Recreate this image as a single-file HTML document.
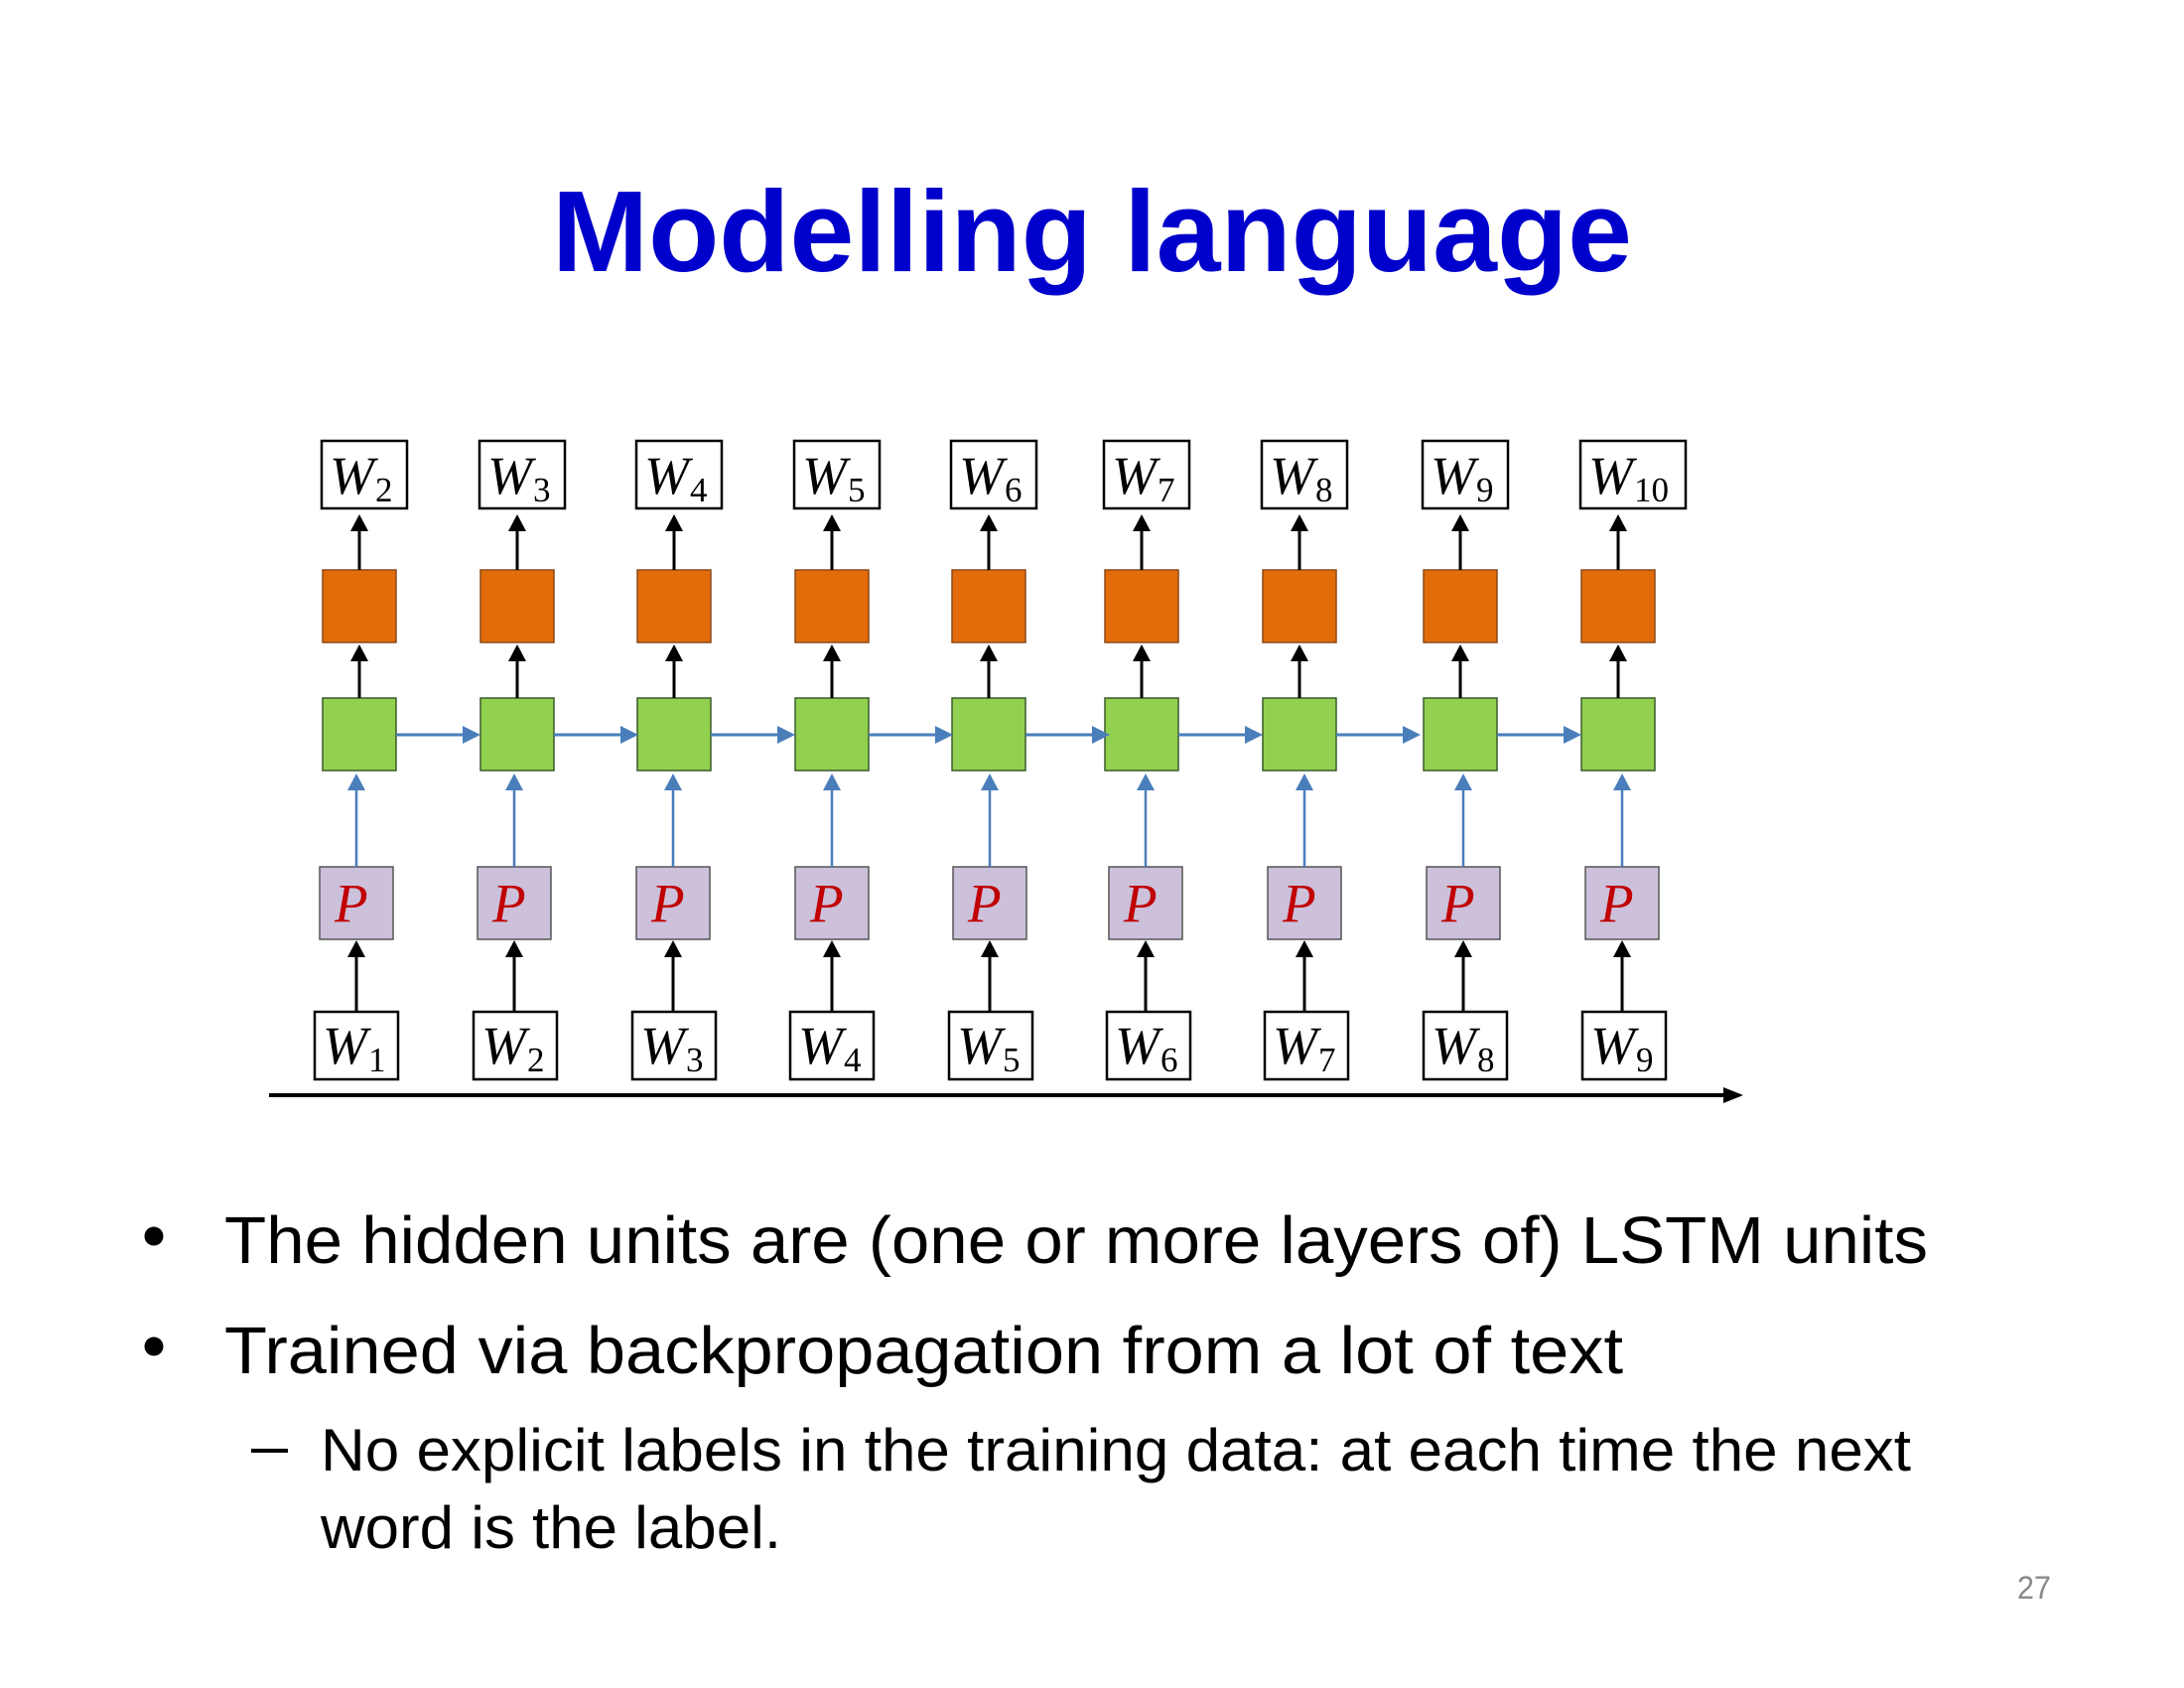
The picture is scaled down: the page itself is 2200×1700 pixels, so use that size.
<!DOCTYPE html>
<html><head><meta charset="utf-8"><style>
html,body{margin:0;padding:0;background:#fff}
svg{display:block}
.w{font-family:"Liberation Serif",serif;font-style:italic;font-size:54px}
.s{font-family:"Liberation Serif",serif;font-style:normal;font-size:35px}
.p{font-family:"Liberation Serif",serif;font-style:italic;font-size:55px;fill:#C00000}
.t{font-family:"Liberation Sans",sans-serif;font-size:67px}
.t2{font-family:"Liberation Sans",sans-serif;font-size:60px}
</style></head><body>
<svg width="2200" height="1700" viewBox="0 0 2200 1700" xmlns="http://www.w3.org/2000/svg">
<text x="556" y="273" font-family="Liberation Sans, sans-serif" font-weight="bold" font-size="116" fill="#0000CC" textLength="1088" lengthAdjust="spacingAndGlyphs">Modelling language</text>

<defs>
<g id="col">
  <rect x="0" y="574" width="74" height="73" fill="#E36C0A" stroke="#8a4a1a" stroke-width="1.5"/>
  <rect x="0" y="703" width="74" height="73" fill="#92D050" stroke="#3a5a2a" stroke-width="1.5"/>
  <line x1="37" y1="574" x2="37" y2="534" stroke="#000" stroke-width="3"/>
  <polygon points="28,535 46,535 37,518" fill="#000"/>
  <line x1="37" y1="703" x2="37" y2="664" stroke="#000" stroke-width="3"/>
  <polygon points="28,666 46,666 37,649" fill="#000"/>
</g>
<g id="pc">
  <rect x="0" y="873" width="74" height="73" fill="#CCC0DA" stroke="#555" stroke-width="1.5"/>
  <text class="p" x="15" y="928">P</text>
  <line x1="37" y1="873" x2="37" y2="794" stroke="#4A7EBB" stroke-width="2.5"/>
  <polygon points="28,796 46,796 37,779" fill="#4A7EBB"/>
  <line x1="37" y1="1019" x2="37" y2="962" stroke="#000" stroke-width="3"/>
  <polygon points="28,964 46,964 37,947" fill="#000"/>
</g>
<g id="ha">
  <line x1="0" y1="740" x2="68" y2="740" stroke="#4A7EBB" stroke-width="3"/>
  <polygon points="67,731 67,749 85,740" fill="#4A7EBB"/>
</g>
</defs>

<use href="#col" x="325"/><use href="#col" x="484"/><use href="#col" x="642"/><use href="#col" x="801"/><use href="#col" x="959"/><use href="#col" x="1113"/><use href="#col" x="1272"/><use href="#col" x="1434"/><use href="#col" x="1593"/>
<use href="#pc" x="322"/><use href="#pc" x="481"/><use href="#pc" x="641"/><use href="#pc" x="801"/><use href="#pc" x="960"/><use href="#pc" x="1117"/><use href="#pc" x="1277"/><use href="#pc" x="1437"/><use href="#pc" x="1597"/>
<use href="#ha" x="399"/><use href="#ha" x="558"/><use href="#ha" x="716"/><use href="#ha" x="875"/><use href="#ha" x="1033"/><use href="#ha" x="1187"/><use href="#ha" x="1346"/><use href="#ha" x="1508"/>

<g fill="#fff" stroke="#000" stroke-width="2.5">
<rect x="324" y="444" width="86" height="68"/><rect x="483" y="444" width="86" height="68"/><rect x="641" y="444" width="86" height="68"/><rect x="800" y="444" width="86" height="68"/><rect x="958" y="444" width="86" height="68"/><rect x="1112" y="444" width="86" height="68"/><rect x="1271" y="444" width="86" height="68"/><rect x="1433" y="444" width="86" height="68"/><rect x="1592" y="444" width="106" height="68"/>
<rect x="317" y="1019" width="84" height="68"/><rect x="477" y="1019" width="84" height="68"/><rect x="637" y="1019" width="84" height="68"/><rect x="796" y="1019" width="84" height="68"/><rect x="956" y="1019" width="84" height="68"/><rect x="1115" y="1019" width="84" height="68"/><rect x="1274" y="1019" width="84" height="68"/><rect x="1434" y="1019" width="84" height="68"/><rect x="1594" y="1019" width="84" height="68"/>
</g>

<g>
<text class="w" x="332" y="497">W<tspan class="s" dx="1" dy="8">2</tspan></text>
<text class="w" x="491" y="497">W<tspan class="s" dx="1" dy="8">3</tspan></text>
<text class="w" x="649" y="497">W<tspan class="s" dx="1" dy="8">4</tspan></text>
<text class="w" x="808" y="497">W<tspan class="s" dx="1" dy="8">5</tspan></text>
<text class="w" x="966" y="497">W<tspan class="s" dx="1" dy="8">6</tspan></text>
<text class="w" x="1120" y="497">W<tspan class="s" dx="1" dy="8">7</tspan></text>
<text class="w" x="1279" y="497">W<tspan class="s" dx="1" dy="8">8</tspan></text>
<text class="w" x="1441" y="497">W<tspan class="s" dx="1" dy="8">9</tspan></text>
<text class="w" x="1600" y="497">W<tspan class="s" dx="1" dy="8">10</tspan></text>

<text class="w" x="325" y="1071">W<tspan class="s" dx="1" dy="8">1</tspan></text>
<text class="w" x="485" y="1071">W<tspan class="s" dx="1" dy="8">2</tspan></text>
<text class="w" x="645" y="1071">W<tspan class="s" dx="1" dy="8">3</tspan></text>
<text class="w" x="804" y="1071">W<tspan class="s" dx="1" dy="8">4</tspan></text>
<text class="w" x="964" y="1071">W<tspan class="s" dx="1" dy="8">5</tspan></text>
<text class="w" x="1123" y="1071">W<tspan class="s" dx="1" dy="8">6</tspan></text>
<text class="w" x="1282" y="1071">W<tspan class="s" dx="1" dy="8">7</tspan></text>
<text class="w" x="1442" y="1071">W<tspan class="s" dx="1" dy="8">8</tspan></text>
<text class="w" x="1602" y="1071">W<tspan class="s" dx="1" dy="8">9</tspan></text>
</g>

<line x1="271" y1="1103" x2="1740" y2="1103" stroke="#000" stroke-width="4"/>
<polygon points="1736,1095 1736,1111 1756,1103" fill="#000"/>

<circle cx="155" cy="1245" r="9.5" fill="#000"/>
<text class="t" x="226" y="1272" textLength="1716" lengthAdjust="spacingAndGlyphs">The hidden units are (one or more layers of) LSTM units</text>
<circle cx="155" cy="1356" r="9.5" fill="#000"/>
<text class="t" x="226" y="1383" textLength="1409" lengthAdjust="spacingAndGlyphs">Trained via backpropagation from a lot of text</text>
<rect x="253" y="1459" width="37" height="4" fill="#000"/>
<text class="t2" x="323" y="1481" textLength="1602" lengthAdjust="spacingAndGlyphs">No explicit labels in the training data: at each time the next</text>
<text class="t2" x="323" y="1559" textLength="464" lengthAdjust="spacingAndGlyphs">word is the label.</text>

<text x="2032" y="1610" font-family="Liberation Sans, sans-serif" font-size="32" fill="#898989" textLength="34" lengthAdjust="spacingAndGlyphs">27</text>
</svg>
</body></html>
